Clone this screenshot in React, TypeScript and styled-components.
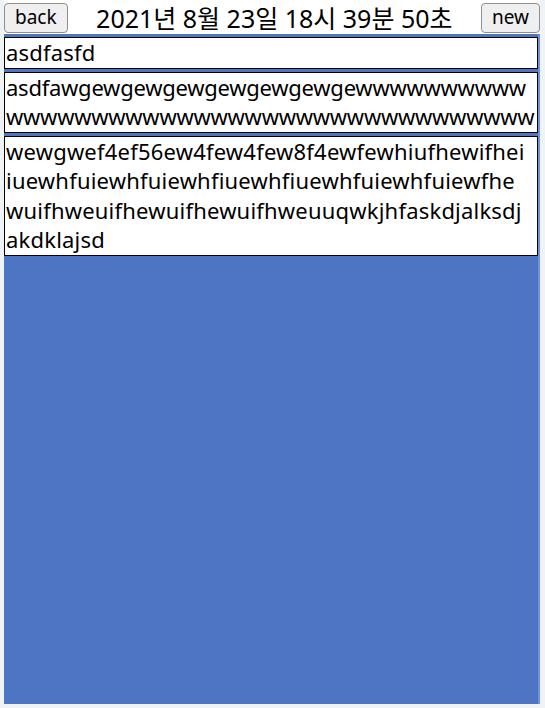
import React from "react";
import styled, { createGlobalStyle } from "styled-components";

const GlobalStyle = createGlobalStyle`
  html, body {
    margin: 0;
    padding: 0;
    background-color: #f0f3f6;
  }
  body {
    font-family: "Noto Sans", "Noto Sans CJK KR", sans-serif;
  }
`;

export type Memo = {
  id: number;
  content: string;
  tracking?: number;
};

// line breaks kept where the original wrapped them
const memos: Memo[] = [
  { id: 1, content: "asdfasfd" },
  {
    id: 2,
    content: "asdfawgewgewgewgewgewgewgewwwwwwwwww\n" + "w".repeat(31),
    tracking: -0.25,
  },
  {
    id: 3,
    content: [
      "wewgwef4ef56ew4few4few8f4ewfewhiufhewifhei",
      "iuewhfuiewhfuiewhfiuewhfiuewhfuiewhfuiewfhe",
      "wuifhweuifhewuifhewuifhweuuqwkjhfaskdjalksdj",
      "akdklajsd",
    ].join("\n"),
  },
];

const Page = styled.div`
  width: 536px;
  height: 704px;
  margin-left: 4px;
  display: flex;
  flex-direction: column;
`;

const Header = styled.header`
  height: 34px;
  display: flex;
  align-items: center;
  padding-top: 1px;
  box-sizing: border-box;
  background-color: #ffffff;
`;

const NavButton = styled.button`
  height: 30px;
  padding: 0 10px;
  font-family: "Noto Sans", sans-serif;
  font-size: 19px;
  color: #000;
  background-color: #efefef;
  border: 1px solid #8f8f8f;
  border-radius: 4px;
  line-height: 1;
`;

const DateTitle = styled.h1`
  flex: 1;
  margin: 0;
  text-align: center;
  font-size: 25px;
  font-weight: 400;
  line-height: 30px;
  font-family: "Noto Sans", "Noto Sans CJK KR", sans-serif;
`;

const MemoArea = styled.main`
  flex: 1;
  display: flex;
  flex-direction: column;
  gap: 3px;
  padding-top: 3px;
  background-color: #4d75c4;
  border-right: 2px solid #7090d8;
`;

const MemoCard = styled.div<{ $tracking?: number }>`
  background-color: #ffffff;
  border: 1px solid #000000;
  padding: 0 1px;
  font-size: 22px;
  letter-spacing: ${(props) => props.$tracking ?? 0.2}px;
  line-height: 29.5px;
  color: #000;
  white-space: pre;
  overflow: hidden;
`;

export default function App() {
  return (
    <>
      <GlobalStyle />
      <Page>
        <Header>
          <NavButton>back</NavButton>
          <DateTitle>2021년 8월 23일 18시 39분 50초</DateTitle>
          <NavButton>new</NavButton>
        </Header>
        <MemoArea>
          {memos.map((memo) => (
            <MemoCard key={memo.id} $tracking={memo.tracking}>
              {memo.content}
            </MemoCard>
          ))}
        </MemoArea>
      </Page>
    </>
  );
}
